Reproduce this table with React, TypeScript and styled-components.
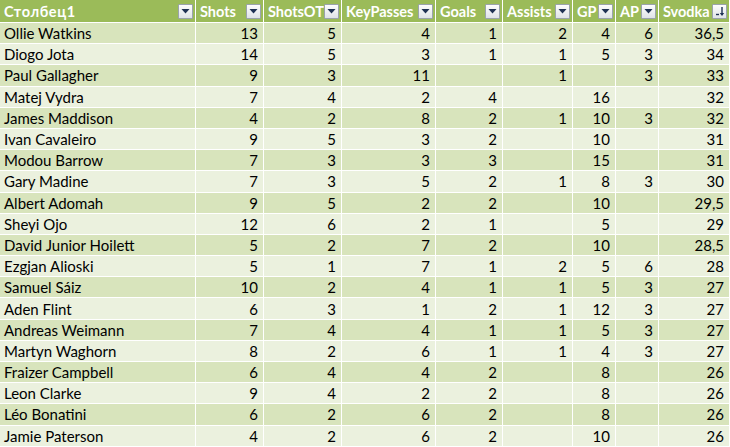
import React from "react";
import styled, { createGlobalStyle } from "styled-components";

const Global = createGlobalStyle`
  html, body { margin: 0; padding: 0; background: #fff; }
  body { font-family: Lato, "Liberation Sans", sans-serif; }
`;

const COLS = "196px 68px 78px 94px 67px 70px 43px 43px 71px";

const Table = styled.div`
  width: 730px;
  height: 447px;
  overflow: hidden;
  display: grid;
  grid-template-columns: ${COLS};
  grid-template-rows: 23px repeat(20, 21.2px);
  background: #fff;
  font-size: 15px;
  color: #000;
`;

const HeadCell = styled.div`
  background: #9bbb59;
  color: #fff;
  font-weight: 700;
  font-size: 14.5px;
  display: flex;
  align-items: center;
  justify-content: space-between;
  padding: 0 2px 0 4px;
  border-right: 1px solid #fff;
  border-bottom: 1px solid #fff;
  box-sizing: border-box;
  white-space: nowrap;
  overflow: hidden;
`;

const HeadLabel = styled.span<{ $wide?: boolean }>`
  letter-spacing: ${(p) => (p.$wide ? "0.6px" : "0")};
`;

const FilterBtn = styled.div`
  width: 15px;
  height: 15px;
  flex: none;
  box-sizing: border-box;
  border: 1px solid #9aa3ad;
  border-radius: 1px;
  background: linear-gradient(#fdfdfd, #dfe3e8);
  display: flex;
  align-items: center;
  justify-content: center;
`;

const Cell = styled.div<{ $band: boolean; $num?: boolean }>`
  background: ${(p) => (p.$band ? "#d8e4bc" : "#ebf1de")};
  display: flex;
  align-items: center;
  justify-content: ${(p) => (p.$num ? "flex-end" : "flex-start")};
  padding: ${(p) => (p.$num ? "0 5px 0 0" : "0 0 0 4px")};
  border-right: 1px solid #fff;
  border-bottom: 1px solid #fff;
  box-sizing: border-box;
  white-space: nowrap;
  overflow: hidden;
`;

const headers = ["Столбец1", "Shots", "ShotsOT", "KeyPasses", "Goals", "Assists", "GP", "AP", "Svodka"];

type Row = [string, ...(string | number)[]];
const rows: Row[] = [
  ["Ollie Watkins", 13, 5, 4, 1, 2, 4, 6, "36,5"],
  ["Diogo Jota", 14, 5, 3, 1, 1, 5, 3, 34],
  ["Paul Gallagher", 9, 3, 11, "", 1, "", 3, 33],
  ["Matej Vydra", 7, 4, 2, 4, "", 16, "", 32],
  ["James Maddison", 4, 2, 8, 2, 1, 10, 3, 32],
  ["Ivan Cavaleiro", 9, 5, 3, 2, "", 10, "", 31],
  ["Modou Barrow", 7, 3, 3, 3, "", 15, "", 31],
  ["Gary Madine", 7, 3, 5, 2, 1, 8, 3, 30],
  ["Albert Adomah", 9, 5, 2, 2, "", 10, "", "29,5"],
  ["Sheyi Ojo", 12, 6, 2, 1, "", 5, "", 29],
  ["David Junior Hoilett", 5, 2, 7, 2, "", 10, "", "28,5"],
  ["Ezgjan Alioski", 5, 1, 7, 1, 2, 5, 6, 28],
  ["Samuel Sáiz", 10, 2, 4, 1, 1, 5, 3, 27],
  ["Aden Flint", 6, 3, 1, 2, 1, 12, 3, 27],
  ["Andreas Weimann", 7, 4, 4, 1, 1, 5, 3, 27],
  ["Martyn Waghorn", 8, 2, 6, 1, 1, 4, 3, 27],
  ["Fraizer Campbell", 6, 4, 4, 2, "", 8, "", 26],
  ["Leon Clarke", 9, 4, 2, 2, "", 8, "", 26],
  ["Léo Bonatini", 6, 2, 6, 2, "", 8, "", 26],
  ["Jamie Paterson", 4, 2, 6, 2, "", 10, "", 26],
];

const DropIcon = () => (
  <svg width="9" height="6" viewBox="0 0 9 6">
    <path d="M0.5 1 H8.5 L4.5 5.5 Z" fill="#1f3154" />
  </svg>
);

const SortIcon = () => (
  <svg width="11" height="11" viewBox="0 0 11 11">
    <path d="M2 8.5 H5" stroke="#1f3154" strokeWidth="1.4" />
    <path d="M8 1 V9" stroke="#1f3154" strokeWidth="1.4" />
    <path d="M5.8 7 L8 10 L10.2 7 Z" fill="#1f3154" />
  </svg>
);

export default function App() {
  return (
    <>
      <Global />
      <Table>
        {headers.map((h, i) => (
          <HeadCell key={h}>
            <HeadLabel $wide={i === 0}>{h}</HeadLabel>
            <FilterBtn>{i === headers.length - 1 ? <SortIcon /> : <DropIcon />}</FilterBtn>
          </HeadCell>
        ))}
        {rows.map((r, ri) =>
          r.map((v, ci) => (
            <Cell key={`${ri}-${ci}`} $band={ri % 2 === 0} $num={ci > 0}>
              {v}
            </Cell>
          ))
        )}
      </Table>
    </>
  );
}
